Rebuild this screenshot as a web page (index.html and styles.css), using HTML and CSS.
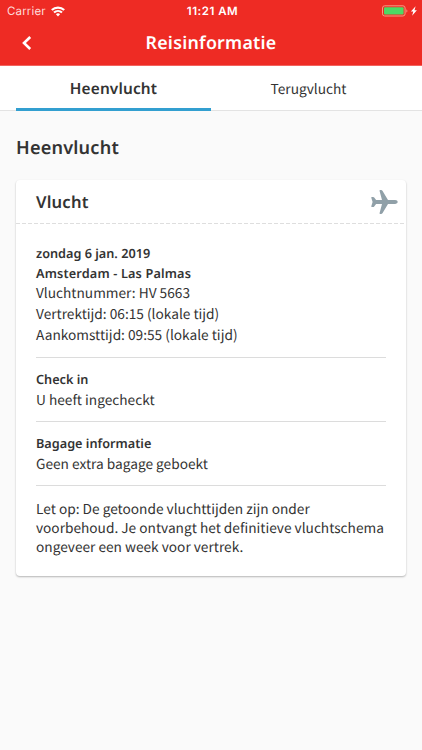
FILE: index.html
```html
<!DOCTYPE html>
<html lang="nl">
<head>
    <meta charset="UTF-8">
    <meta name="viewport" content="width=device-width, initial-scale=1.0">
    <title>Reisinformatie</title>
    <link rel="stylesheet" href="styles.css">
</head>
<body>
    <header class="header">
        <div class="status-bar">
            <div class="carrier">
                <span>Carrier</span>
                <svg class="wifi" viewBox="0 0 14 11" width="14" height="11" fill="none" stroke="#fff" stroke-width="2.1">
                    <path d="M0.8 4.1a8.9 8.9 0 0 1 12.4 0"/>
                    <path d="M3 6.6a5.8 5.8 0 0 1 8 0"/>
                    <path d="M7 10.4L4.9 8.3a3 3 0 0 1 4.2 0z" fill="#fff" stroke="none"/>
                </svg>
            </div>
            <div class="time">11:21 AM</div>
            <div class="power">
                <svg viewBox="0 0 36 12" width="36" height="12">
                    <rect x="0.5" y="0.8" width="22.6" height="10.2" rx="2.2" fill="none" stroke="#f69a83"/>
                    <rect x="2" y="2.3" width="19.6" height="7.2" rx="1" fill="#4cd964"/>
                    <path d="M24.4 4.2c1.3.5 1.3 2.9 0 3.4z" fill="#f69a83"/>
                    <path d="M33.6 1.2l-4.7 5.3h2.4l-1.2 4.2 4.8-5.4h-2.4z" fill="#fff"/>
                </svg>
            </div>
        </div>
        <div class="nav">
            <svg class="back" viewBox="0 0 10 14" width="10" height="14" fill="none" stroke="#fff" stroke-width="2.6">
                <path d="M8.2 1L2 7l6.2 6"/>
            </svg>
            <h1>Reisinformatie</h1>
        </div>
    </header>

    <nav class="tabs">
        <a class="tab active">Heenvlucht</a>
        <a class="tab">Terugvlucht</a>
    </nav>

    <main class="content">
        <h2>Heenvlucht</h2>
        <div class="card">
            <div class="card-header">
                <h3>Vlucht</h3>
                <svg class="plane" viewBox="0 0 27 24" width="27" height="24" fill="#90a0a8">
                    <path d="M24.2 10.1H17L11.6.9Q11.1 0 10 0H9.2Q8.3 0 8.6 1L11 10.1H5.1L3.2 7.6Q2.8 7 2.1 7H.8Q.1 7 .3 7.7L1.6 12 .3 16.3Q.1 17 .8 17H2.1Q2.8 17 3.2 16.4L5.1 13.9H11L8.6 23Q8.3 24 9.2 24H10Q11.1 24 11.6 23.1L17 13.9H24.2Q26.6 13.7 26.8 12 26.6 10.3 24.2 10.1z"/>
                </svg>
            </div>
            <div class="card-body">
                <section class="flight">
                    <h4>zondag 6 jan. 2019</h4>
                    <h4 class="route">Amsterdam - Las Palmas</h4>
                    <p>Vluchtnummer: HV 5663</p>
                    <p>Vertrektijd: 06:15 (lokale tijd)</p>
                    <p>Aankomsttijd: 09:55 (lokale tijd)</p>
                </section>
                <section>
                    <h4>Check in</h4>
                    <p>U heeft ingecheckt</p>
                </section>
                <section>
                    <h4>Bagage informatie</h4>
                    <p>Geen extra bagage geboekt</p>
                </section>
                <p class="note">Let op: De getoonde vluchttijden zijn onder voorbehoud. Je ontvangt het definitieve vluchtschema ongeveer een week voor vertrek.</p>
            </div>
        </div>
    </main>
</body>
</html>
```
FILE: styles.css
```css
* {
    margin: 0;
    padding: 0;
    box-sizing: border-box;
}

body {
    background: #fafafa;
    color: #333;
    font-family: "Noto Sans CJK JP", "Noto Sans", sans-serif;
    font-size: 13.7px;
    text-rendering: geometricPrecision;
    min-height: 750px;
}

h1, h2, h3, h4, .tab.active {
    font-family: "Noto Sans", "Open Sans", sans-serif;
    font-weight: 600;
}

.header {
    height: 66px;
    background: #ee2b24;
    color: #fff;
    border-bottom: 1px solid #f2635e;
}

.status-bar {
    height: 22px;
    display: grid;
    grid-template-columns: 1fr auto 1fr;
    align-items: center;
    padding: 0 4px 0 7px;
    font-family: Inter, sans-serif;
    font-size: 11.5px;
}

.carrier {
    display: flex;
    align-items: center;
    gap: 5px;
    color: #ffdedc;
    letter-spacing: 0.15px;
}

.time {
    font-weight: 600;
    letter-spacing: 0.5px;
}

.power {
    display: flex;
    justify-content: flex-end;
}

.nav {
    height: 43px;
    display: grid;
    grid-template-columns: 40px 1fr 40px;
    align-items: center;
}

.back {
    margin: -1px 0 0 22px;
}

.nav h1 {
    font-size: 17.8px;
    line-height: 24px;
    margin-top: -1px;
    letter-spacing: 0.25px;
    text-align: center;
}

.tabs {
    height: 45px;
    display: flex;
    padding: 0 16px;
    background: #fff;
    border-bottom: 1px solid #e3e3e3;
}

.tab {
    flex: 1;
    height: 45px;
    line-height: 44px;
    text-align: center;
}

.tab.active {
    font-size: 15.4px;
    line-height: 46px;
    letter-spacing: 0.15px;
    border-bottom: 3px solid #329fd0;
}

.content {
    padding: 24px 16px 0;
}

.content h2 {
    font-size: 18.1px;
    line-height: 26px;
    letter-spacing: 0.2px;
}

.card {
    height: 396px;
    margin-top: 19px;
    background: #fff;
    border-radius: 4px;
    box-shadow: 0 1px 2px rgba(0, 0, 0, 0.28);
}

.card-header {
    height: 44px;
    display: flex;
    align-items: center;
    justify-content: space-between;
    padding: 0 8px 0 20px;
    background: repeating-linear-gradient(90deg, #dedede 0 4px, transparent 4px 6px) 0 42.5px / 100% 1.5px no-repeat;
}

.card-header h3 {
    font-size: 16.6px;
    line-height: 22px;
    margin-top: -1px;
    letter-spacing: 0.2px;
}

.card-body {
    padding: 20px 20px 0;
}

.card-body section {
    height: 64px;
    padding-top: 12px;
    border-bottom: 1px solid #dcdcdc;
}

.card-body .flight {
    height: 114px;
    padding-top: 0;
}

.card-body h4 {
    font-size: 12.7px;
    line-height: 19.5px;
}

.card-body p {
    line-height: 18px;
}

.card-body .flight p {
    line-height: 21.3px;
}

.card-body .route {
    margin-bottom: -1.4px;
    letter-spacing: 0.16px;
}

.card-body .note {
    padding-top: 13px;
    line-height: 19.2px;
}
```
